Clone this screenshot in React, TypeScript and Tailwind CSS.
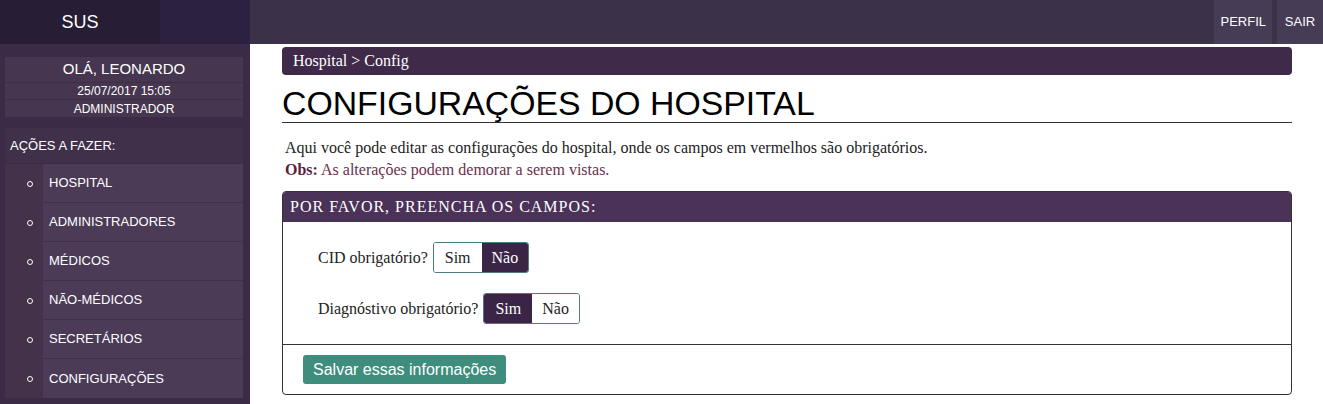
const menu = ["HOSPITAL", "ADMINISTRADORES", "MÉDICOS", "NÃO-MÉDICOS", "SECRETÁRIOS", "CONFIGURAÇÕES"];

function Toggle({ value }: { value: boolean }) {
  return (
    <div className="flex h-[31px] rounded-[3px] border border-[#4d7f7a] overflow-hidden">
      <span className={`flex items-center px-[11px] ${value ? "bg-[#3a2546] text-white" : "bg-white text-[#222]"}`}>Sim</span>
      <span className={`flex items-center px-[10px] ${!value ? "bg-[#3a2546] text-white" : "bg-white text-[#222]"}`}>Não</span>
    </div>
  );
}

export default function App() {
  return (
    <div className="w-[1323px] h-[404px] overflow-hidden flex flex-col bg-white font-['Liberation_Sans',Arial,sans-serif]">
      {/* Top bar */}
      <header className="flex h-[44px] shrink-0 bg-[#3b3249]">
        <div className="w-[160px] bg-[#271d34] flex items-center justify-center text-white text-[18px]">SUS</div>
        <div className="w-[90px] bg-[#2c2140]" />
        <div className="flex-1" />
        <nav className="flex gap-[5px] text-white text-[13px]">
          <a className="flex items-center px-[6px] bg-[#463c56]">PERFIL</a>
          <a className="flex items-center justify-center w-[46px] bg-[#463c56]">SAIR</a>
        </nav>
      </header>

      <div className="flex flex-1 min-h-0">
        {/* Sidebar */}
        <aside className="w-[250px] shrink-0 bg-[#3c2b47] px-[5px] pr-[7px] pt-[13px] text-white">
          <div className="bg-[#47364f] text-center">
            <div className="h-[26px] flex items-center justify-center text-[15px] border-b border-[#3e2d47]">OLÁ, LEONARDO</div>
            <div className="h-[17px] flex items-center justify-center text-[12px] border-b border-[#3e2d47]">25/07/2017 15:05</div>
            <div className="h-[17px] flex items-center justify-center text-[12px]">ADMINISTRADOR</div>
          </div>
          <div className="mt-[11px] h-[35px] bg-[#413049] flex items-center px-[5px] text-[13px]">AÇÕES A FAZER:</div>
          <ul className="bg-[#433249] mt-[1px]">
            {menu.map((item, i) => (
              <li key={item} className="flex h-[39px]">
                <div className="w-[38px] flex items-center justify-center">
                  <span className="w-[6px] h-[6px] rounded-full border border-white ml-[12px]" />
                </div>
                <div className={`flex-1 bg-[#4c3b57] flex items-center pl-[6px] text-[13px] ${i < menu.length - 1 ? "border-b border-[#40304b]" : ""}`}>
                  {item}
                </div>
              </li>
            ))}
          </ul>
        </aside>

        {/* Main */}
        <main className="flex-1 pl-[32px] pr-[31px] pt-[3px] font-['Liberation_Serif','Times_New_Roman',serif] text-[16px] text-[#222]">
          <div className="h-[28px] rounded-[4px] bg-[#3f2a4a] text-white flex items-center px-[11px]">Hospital &gt; Config</div>

          <h1 className="mt-[10px] font-['Liberation_Sans',Arial,sans-serif] text-[33.8px] leading-[36px] text-black pb-[1px] border-b border-[#333]">
            CONFIGURAÇÕES DO HOSPITAL
          </h1>

          <p className="mt-[14px] pl-[3px] leading-[22px]">
            Aqui você pode editar as configurações do hospital, onde os campos em vermelhos são obrigatórios.
          </p>
          <p className="pl-[3px] leading-[22px] text-[#6e2f4d]">
            <b className="text-[#5a1f3e]">Obs:</b> As alterações podem demorar a serem vistas.
          </p>

          <section className="mt-[10px] border border-[#333] rounded-[4px] overflow-hidden">
            <div className="h-[30px] bg-[#4b3259] text-white flex items-center px-[7px] tracking-[1px]">
              POR FAVOR, PREENCHA OS CAMPOS:
            </div>
            <div className="pl-[35px] pt-[20px] pb-[20px] flex flex-col gap-[20px] border-b border-[#333]">
              <div className="flex items-center gap-[5px]">
                <span>CID obrigatório?</span>
                <Toggle value={false} />
              </div>
              <div className="flex items-center gap-[5px]">
                <span>Diagnóstivo obrigatório?</span>
                <Toggle value={true} />
              </div>
            </div>
            <div className="px-[20px] pt-[10px] pb-[10px]">
              <button className="h-[29px] px-[10px] rounded-[3px] bg-[#3f8d7d] text-white font-['Liberation_Sans',Arial,sans-serif] text-[16px]">
                Salvar essas informações
              </button>
            </div>
          </section>
        </main>
      </div>
    </div>
  );
}
